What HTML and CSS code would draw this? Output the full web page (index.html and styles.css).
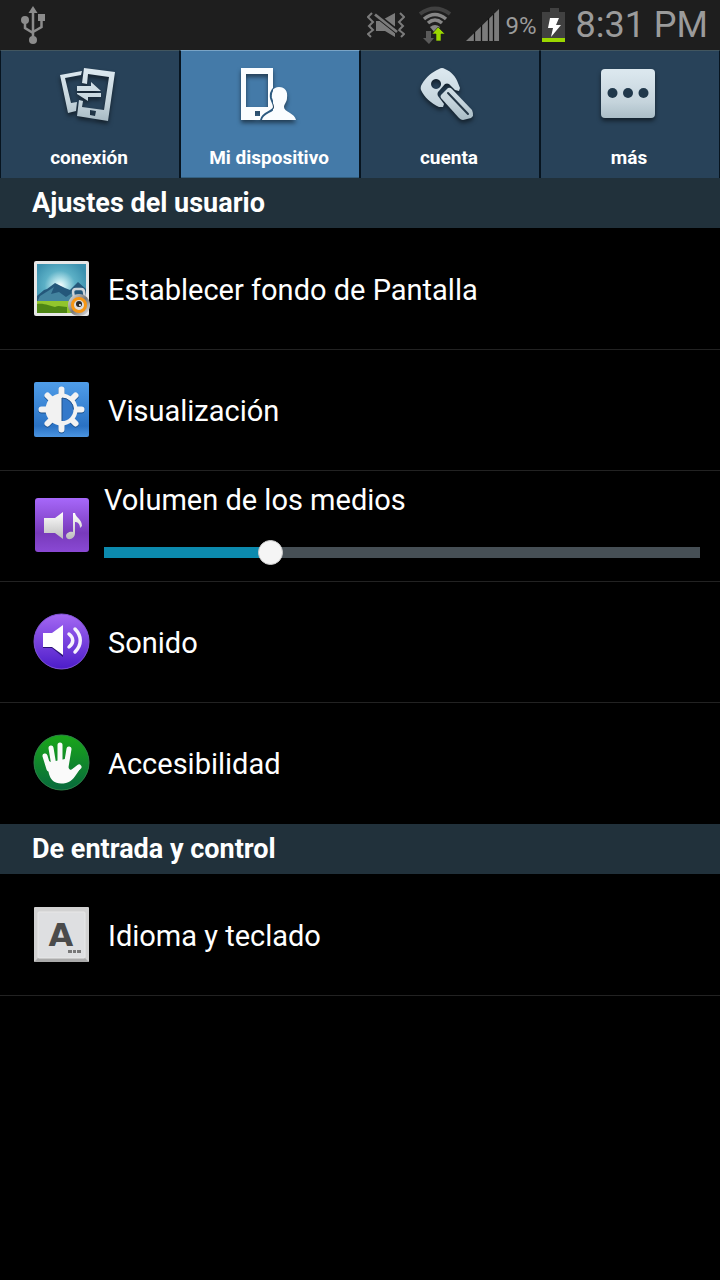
FILE: index.html
```html
<!DOCTYPE html>
<html lang="es">
<head>
<meta charset="utf-8">
<meta name="viewport" content="width=device-width, initial-scale=1">
<title>Ajustes</title>
<link rel="stylesheet" href="styles.css">
</head>
<body>
<header class="status">
  <svg class="usb" width="24" height="40" viewBox="0 0 24 40" fill="#8c8c8c" stroke="#8c8c8c">
    <path d="M12 1l4.500 7h-9z" stroke="none"/><path d="M12 7v27M4 15v8l8 5M20.500 12v10L12 27" fill="none" stroke-width="2.500"/>
    <circle cx="4" cy="15" r="4" stroke="none"/><path d="M17 9h7v7h-7z" stroke="none"/><circle cx="12" cy="35" r="4" stroke="none"/>
  </svg>
  <div class="indicators">
    <svg width="38" height="30" viewBox="0 0 38 30">
      <path d="M5 3L1 7l5 5-4 4 4 4-5 4 3 3M33 3l4 4-5 5 4 4-4 4 5 4-3 3" fill="none" stroke="#7b7b7b" stroke-width="2"/>
      <path d="M9 11h4l15 12v4l-10-6H9zM17 9l11-6v14z" fill="#7b7b7b"/>
      <path d="M8 4l22 17.500" stroke="#1e1e1e" stroke-width="5"/><path d="M8 4.500L30 22" stroke="#7b7b7b" stroke-width="2.800"/>
    </svg>
    <svg class="wifi" width="34" height="38" viewBox="0 0 34 38" fill="none">
      <path d="M2 8Q17-3 32 8" stroke="#414141" stroke-width="4"/><path d="M6 13Q17 4 28 13M10 17Q17 11 24 17" stroke="#868686" stroke-width="3.500"/><path d="M12 21q5-4 10 0l-5 6z" fill="#868686"/>
      <path d="M8 25h5v7h3l-5 6-6-6h3z" fill="#5a5a5a"/><path d="M20 21l7 7h-4v7h-5v-7h-4z" fill="#9bd800" stroke="#1e1e1e" stroke-width=".6"/>
    </svg>
    <svg width="34" height="34" viewBox="0 0 34 34">
      <path d="M0 33L33 1v32z" fill="#7b7b7b"/><path d="M8.500 24v9M15.500 17v16M22.500 10v23M27.500 6v27" stroke="#111" stroke-width="1.300"/>
    </svg>
    <span class="percent">9%</span>
    <svg width="24" height="36" viewBox="0 0 24 36">
      <path d="M8 1h9v4h6v27H0V5h8z" fill="#414141"/><path d="M0 31h23v4H0z" fill="#9bd800"/><path d="M8 11h9l-3 7h5L9 30l2-9H6z" fill="#fff"/>
    </svg>
    <time class="clock">8:31 PM</time>
  </div>
</header>

<nav class="tabs">
  <button class="tab" type="button">
    <svg width="60" height="60" viewBox="0 0 60 60">
      <defs><linearGradient id="metal" x1="0" y1="0" x2="0" y2="60" gradientUnits="userSpaceOnUse"><stop offset=".1" stop-color="#dbe7ee"/><stop offset=".6" stop-color="#c5d4dc"/><stop offset="1" stop-color="#9fb3bd"/></linearGradient></defs>
      <path d="M1 9L23 5l-1 4L6 12l6 25 6-1-1 9-8 2z" fill="url(#metal)"/>
      <path fill-rule="evenodd" d="M25 2L56 6 49 55 18 50 20 34l4 1-1 6 22 3 5-33-21-3-1 10-5-1zM31 44v5l5 1 1-5z" fill="url(#metal)"/>
      <path d="M18 20h14v-4l10 9H18zM42 27v4H29v4l-11-7v-1z" fill="url(#metal)"/>
    </svg>
    <span>conexión</span>
  </button>
  <button class="tab selected" type="button" aria-current="page">
    <svg width="60" height="60" viewBox="0 0 60 60">
      <defs><clipPath id="phone"><path d="M0 0h34v54H0z"/></clipPath></defs>
      <path fill-rule="evenodd" d="M2 2h32v52H2zM7 8v33h22V8zM16 45v5h5v-5z" fill="#fafdff"/>
      <path id="person" d="M40 21c-6 0-9 5-8 11 1 4 3 6 3 9 0 5-12 5-13 13h35c-1-7-12-8-12-13 0-3 3-5 3-9 1-7-2-11-8-11z" fill="#fafdff"/>
      <path d="M40 21c-6 0-9 5-8 11 1 4 3 6 3 9 0 5-12 5-13 13" clip-path="url(#phone)" fill="none" stroke="#2c5a80" stroke-width="2"/>
    </svg>
    <span>Mi dispositivo</span>
  </button>
  <button class="tab" type="button">
    <svg width="60" height="60" viewBox="0 0 60 60">
      <path fill-rule="evenodd" d="M20 3q3-2 6 0c7 3 11 8 13 14l2 5-1 3-4-1-6-6q-2-1-4 0l-7 8q-1 2 0 4l6 8-1 3h-4C12 37 5 31 2 24q-1-3 1-6C7 11 13 6 20 3zM17 13a5 5 0 1 0 .1 0z" fill="url(#metal)"/>
      <path d="M29 22q2-1 4 1l20 21q1 2 1 6l-2 2-8 2q-2 0-4-2L22 32q-1-2 0-3z" fill="url(#metal)"/><path d="M29 27l20 21" stroke="#253746" stroke-width="2" stroke-linecap="round"/>
    </svg>
    <span>cuenta</span>
  </button>
  <button class="tab" type="button">
    <svg width="60" height="60" viewBox="0 0 60 60">
      <path fill-rule="evenodd" d="M6 3h46q4 0 4 4v41q0 4-4 4H6q-4 0-4-4V7q0-4 4-4z" fill="url(#metal)"/><g fill="#20384b"><circle cx="13.500" cy="27" r="5"/><circle cx="29" cy="27" r="5"/><circle cx="44.500" cy="27" r="5"/></g>
    </svg>
    <span>más</span>
  </button>
</nav>

<main>
  <h2 class="heading">Ajustes del usuario</h2>
  <a class="row" href="#fondo">
    <svg width="60" height="60" viewBox="0 0 60 60">
      <defs><radialGradient id="sky" cx="28" cy="27" r="28" gradientUnits="userSpaceOnUse"><stop stop-color="#fff"/><stop offset=".2" stop-color="#bfe8ee"/><stop offset=".55" stop-color="#5cb0c6"/><stop offset="1" stop-color="#3c91af"/></radialGradient>
      <linearGradient id="steel" x1="0" y1="0" x2="1" y2="1"><stop stop-color="#eee"/><stop offset=".5" stop-color="#777"/><stop offset="1" stop-color="#eee"/></linearGradient></defs>
      <rect x="2" y="2" width="55" height="55" rx="2" fill="#e7e7e7"/><path d="M5 5h49v49H5z" fill="url(#sky)"/>
      <path d="M5 37l7-6 3-1 8-6 10 5 5 2 8-8 8 7v15H5z" fill="#24577a"/><path d="M8 37l8-5 6-4-3 7 8-2 7 5 6-4v9H5z" fill="#43839f"/>
      <path d="M5 42h49v12H5z" fill="#91c52d"/><path d="M5 45c8-1 12 2 18 3 4-2 7 0 12 0v6H5z" fill="#4d8514"/>
      <path d="M42 39l-1-6q0-3 3-3h5q3 0 3 3l1 6" fill="none" stroke="#ccd3d8" stroke-width="2.500"/>
      <circle cx="47" cy="46" r="11" fill="url(#steel)"/><circle cx="47" cy="46" r="6.500" fill="#ddd" stroke="#f79613" stroke-width="3"/><circle cx="47" cy="45" r="3" fill="#282828"/><circle cx="48" cy="46" r="1" fill="#fff"/>
    </svg>
    <span>Establecer fondo de Pantalla</span>
  </a>
  <a class="row" href="#visualizacion">
    <svg width="60" height="60" viewBox="0 0 60 60">
      <defs><linearGradient id="blue" x1="0" y1="0" x2="0" y2="1"><stop stop-color="#4f9de9"/><stop offset=".8" stop-color="#2a72c4"/><stop offset="1" stop-color="#4b94e0"/></linearGradient></defs>
      <rect x="2" y="2" width="55" height="55" rx="2" fill="url(#blue)"/>
      <g fill="none" stroke-linecap="round"><path d="M29.500 9.500v40M9.500 29.500h40M15.500 15.500l28 28M43.500 15.500l-28 28" stroke="#1d508b" stroke-width="6" transform="translate(0 1)"/><path d="M29.500 9.500v40M9.500 29.500h40M15.500 15.500l28 28M43.500 15.500l-28 28" stroke="#f2f2f2" stroke-width="6"/></g>
      <circle cx="29.500" cy="29.500" r="16" fill="#f2f2f2"/><path d="M30 18a11.500 11.500 0 0 1 0 23z" fill="#3479ca"/><path d="M30 18a11.500 11.500 0 0 1 11.500 11.500M30 18v23" fill="none" stroke="#1d508b"/>
    </svg>
    <span>Visualización</span>
  </a>
  <div class="row volume">
    <svg width="60" height="60" viewBox="0 0 60 60">
      <defs><linearGradient id="purple" x1="0" y1="0" x2="0" y2="1"><stop stop-color="#a768fa"/><stop offset=".65" stop-color="#783abb"/><stop offset="1" stop-color="#8a49d4"/></linearGradient><linearGradient id="silver" x1="0" y1="0" x2="0" y2="1"><stop stop-color="#fff"/><stop offset="1" stop-color="#bcbcbc"/></linearGradient></defs>
      <rect x="3" y="2" width="54" height="54" rx="3" fill="url(#purple)"/>
      <path d="M12 22h11l8-6v27l-8-6H12z" fill="url(#silver)"/><path d="M41 17h2c1 5 7 6 7 13l-2 2c0-5-3-6-5-6v11c0 7-9 8-9 3 0-3 4-5 7-4z" fill="url(#silver)"/>
    </svg>
    <div class="control">
      <label for="media-volume">Volumen de los medios</label>
      <input id="media-volume" class="slider" type="range" min="0" max="100" value="27" style="--level:27%">
    </div>
  </div>
  <a class="row" href="#sonido">
    <svg width="60" height="60" viewBox="0 0 60 60">
      <defs><linearGradient id="violet" x1="0" y1="0" x2="0" y2="1"><stop stop-color="#a468f3"/><stop offset="1" stop-color="#4c1cc9"/></linearGradient></defs>
      <circle cx="29.500" cy="29.500" r="27.500" fill="url(#violet)" stroke="#8254d8"/><path d="M11 22h9l11-8v31l-11-9h-9z" fill="#291174"/><path d="M11 21h9l11-8v30l-11-8h-9z" fill="#fff"/>
      <path d="M37 22c5 4 5 9 0 13M43 17c7 7 7 16 0 23" fill="none" stroke="#f5f2fc" stroke-width="3.500" stroke-linecap="round"/>
    </svg>
    <span>Sonido</span>
  </a>
  <a class="row" href="#accesibilidad">
    <svg width="60" height="60" viewBox="0 0 60 60">
      <defs><linearGradient id="green" x1="0" y1="0" x2="0" y2="1"><stop stop-color="#1aa719"/><stop offset="1" stop-color="#07693d"/></linearGradient></defs>
      <circle cx="29.500" cy="29.500" r="27.500" fill="url(#green)" stroke="#2d8347"/>
      <path d="M17 36L13 23M22 33L19 15M28 32V12M34 34l3-18M38 41l9-7" fill="none" stroke="#fafafa" stroke-width="5" stroke-linecap="round"/>
      <path d="M14 27l5 2 14-3 3 2c-1 4 0 8 3 9l6-3 3 2c-4 6-8 13-14 14-10 2-15-2-17-9z" fill="#fafafa"/>
    </svg>
    <span>Accesibilidad</span>
  </a>
  <h2 class="heading">De entrada y control</h2>
  <a class="row" href="#idioma">
    <svg width="60" height="60" viewBox="0 0 60 60">
      <rect x="2" y="2" width="55" height="55" rx="1" fill="#d2d2d2"/><path d="M2 57l4-4h47l4 4z" fill="#aaa"/><rect x="6" y="7" width="47" height="46" rx="1" fill="#dedfe1" stroke="#e8e8e8"/>
      <text class="key" x="29" y="41" text-anchor="middle">A</text><path d="M36 45h4v3h-4zM41 45h3v3h-3zM45 45h4v3h-4z" fill="#777"/>
    </svg>
    <span>Idioma y teclado</span>
  </a>
</main>
</body>
</html>
```
FILE: styles.css
```css
* { box-sizing: border-box; }
body {
  margin: 0;
  min-height: 100vh;
  background: #000;
  color: #fff;
  font-family: Roboto, "Liberation Sans", sans-serif;
}
svg { display: block; flex: none; }
.status {
  display: flex;
  align-items: center;
  justify-content: space-between;
  height: 50px;
  padding: 0 12px 0 21px;
  background: #1e1e1e;
  color: #9b9b9b;
}
.indicators { display: flex; align-items: center; gap: 5px; }
.wifi { margin: 0 9px 0 8px; }
.percent { padding-top: 2px; font-size: 24px; line-height: 32px; }
.clock { margin-left: 5px; font-size: 36px; line-height: 48px; }
.tabs {
  display: grid;
  grid-template-columns: repeat(4, 1fr);
  height: 128px;
}
.tab {
  display: flex;
  flex-direction: column;
  align-items: center;
  gap: 20px;
  margin: 0;
  padding: 15px 2px 0 0;
  border: solid #07141f;
  border-width: 1px 1px 0;
  border-top-color: #42565f;
  background: #284259;
  color: #fff;
  font: 700 19px/24px Roboto, "Liberation Sans", sans-serif;
}
.tab svg { filter: drop-shadow(0 3px 2px rgba(0, 0, 0, .5)); }
.selected {
  background: #447aa8;
  border-top-color: #79a4c6;
  box-shadow: inset 0 -1px #346080;
}
.heading {
  margin: 0 0 1px;
  padding: 1px 32px 0;
  background: #21313b;
  font-size: 27px;
  font-weight: 700;
  line-height: 49px;
}
.row {
  display: flex;
  align-items: center;
  gap: 16px;
  min-height: 121px;
  padding: 0 20px 0 32px;
  border-bottom: 1px solid #222;
  color: #fff;
  font-size: 29px;
  line-height: 36px;
  text-decoration: none;
}
.row > span { padding-top: 2px; }
.row:has(+ .heading) { border-bottom-color: #000; }
.volume { min-height: 111px; gap: 12px; }
.control {
  display: flex;
  flex: 1;
  flex-direction: column;
  gap: 22px;
  padding-bottom: 6px;
}
.slider {
  appearance: none;
  width: 100%;
  height: 25px;
  margin: 0;
  background: linear-gradient(to right, #0c8aae var(--level), #464f55 var(--level)) center / 100% 11px no-repeat;
}
.slider::-webkit-slider-thumb {
  appearance: none;
  width: 25px;
  height: 25px;
  border: 1px solid #ccc;
  border-radius: 50%;
  background: #f5f5f5;
}
.key { fill: #4b4b4b; font: 700 32px "DejaVu Sans", sans-serif; }
```
